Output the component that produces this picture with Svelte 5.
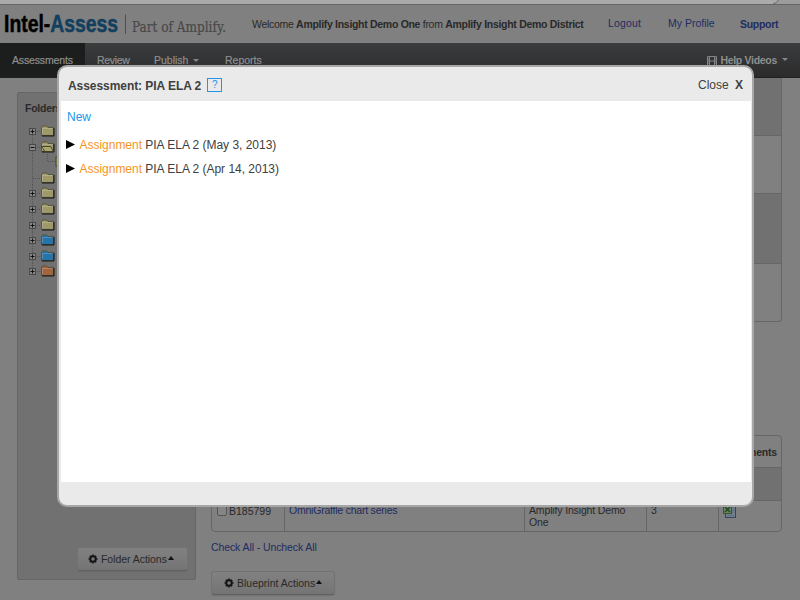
<script>
  const folders = [
    { c: '#9d996a', box: '+' },
    { c: '#9d996a', box: '−', open: true },
    { c: '#9d996a', child: true },
    { c: '#9d996a' },
    { c: '#9d996a', box: '+' },
    { c: '#9d996a', box: '+' },
    { c: '#9d996a', box: '+' },
    { c: '#2674a8', box: '+' },
    { c: '#2674a8', box: '+' },
    { c: '#a0663f', box: '+' }
  ];
  const assignments = ['PIA ELA 2 (May 3, 2013)', 'PIA ELA 2 (Apr 14, 2013)'];
</script>

{#snippet gear()}
  <svg class="gear" width="10" height="10" viewBox="0 0 10 10">
    <circle cx="5" cy="5" r="2.700" fill="none" stroke="#151515" stroke-width="2" />
    <path d="M5 0.500V1.800M5 8.200V9.500M0.500 5H1.800M8.200 5H9.500M1.900 1.900L2.700 2.700M7.300 7.300L8.100 8.100M1.900 8.100L2.700 7.300M7.300 2.700L8.100 1.900" stroke="#151515" stroke-width="1.700" />
  </svg>
{/snippet}

<div class="page">
  <div class="strip">
    <svg width="30" height="5" viewBox="0 0 30 5"><path d="M4 4Q8 3 9 0H30V4Z" fill="#9c9c9c" /><path d="M3 4Q7 3 8.500 0" fill="none" stroke="#666" /></svg>
  </div>
  <header>
    <svg class="logo" width="232" height="38" viewBox="0 0 232 38">
      <text class="brand" x="4" y="27" textLength="114" lengthAdjust="spacingAndGlyphs">Intel-<tspan class="blue">Assess</tspan></text>
      <path d="M125.500 9.500V29" stroke="#505050" />
      <text class="tag" x="132" y="26.500" textLength="94" lengthAdjust="spacingAndGlyphs">Part of Amplify.</text>
    </svg>
    <p class="welcome">Welcome <b>Amplify Insight Demo One</b> from <b>Amplify Insight Demo District</b></p>
    <nav class="links"><a class="out">Logout</a><a class="prof">My Profile</a><a class="sup"><b>Support</b></a></nav>
  </header>
  <nav class="bar">
    <span class="tab on">Assessments</span><span class="tab review">Review</span><span class="tab publish">Publish<i class="down"></i></span><span class="tab">Reports</span>
    <span class="help">
      <svg width="10" height="10" viewBox="0 0 10 10"><path d="M.5.5H9.500V9.500H.5ZM2.500.5V9.500M7.500.5V9.500M2.500 5H7.500M.5 3H2.500M.5 5H2.500M.5 7H2.500M7.500 3H9.500M7.500 5H9.500M7.500 7H9.500" fill="none" stroke="#8d8d8d" stroke-width=".9" /></svg>
      <b>Help Videos</b><i class="down"></i>
    </span>
  </nav>

  <div class="content">
    <aside>
      <h2>Folders</h2>
      <div class="tree">
        {#each folders as f, i}
          <svg width="40" height="15.600" viewBox="0 0 40 15.600">
            <path d={i === 0 ? 'M7.500 8V16' : i === 9 ? 'M7.500 0V8' : 'M7.500 0V16'} stroke="#555" stroke-dasharray="1 1" />
            {#if f.child}
              <path d="M22.500 0V7.500H31" fill="none" stroke="#555" stroke-dasharray="1 1" />
              <rect x="31" y="3" width="9" height="9" fill={f.c} stroke="#44431f" />
            {:else}
              <path d="M8 8.500H17" stroke="#555" stroke-dasharray="1 1" />
              {#if f.box}
                <rect x="4.500" y="5.500" width="6" height="6" fill="#858585" stroke="#4a4a4a" />
                <path d={f.box === '+' ? 'M5.500 8.500H9.500M7.500 6.500V10.500' : 'M5.500 8.500H9.500'} stroke="#111" />
              {/if}
              <path d="M16.500 12.500V4.500L18 3H21.500L23 4.500H28.500V12.500Z" fill={f.c} stroke="#4d4b33" stroke-width=".8" />
              <path d="M17.500 11V5.500H27.500" fill="none" stroke="#ffffff35" />
              <path d="M17 13H29V5" fill="none" stroke="#151515" />
              {#if f.open}
                <path d="M16.500 7.500H25.500L28.500 12.500H20Z" fill="#aaa66f" stroke="#34331d" stroke-width=".8" />
              {/if}
            {/if}
          </svg>
        {/each}
      </div>
      <button class="fa">{@render gear()}<span>Folder Actions</span><i class="up"></i></button>
    </aside>

    <main>
      <div class="upper">
        <div class="dark r1"></div><div class="r2"></div><div class="dark r3"></div><div class="r4"></div>
      </div>
      <div class="lower">
        <div class="row head"><b>Assessments</b></div>
        <div class="row dark mid"></div>
        <div class="row cells">
          <div class="c1"><span class="check"></span><span>B185799</span></div>
          <div class="c2"><a>OmniGraffle chart series</a></div>
          <div class="c3">Amplify Insight Demo<br />One</div>
          <div class="c4">3</div>
          <div class="c5">
            <svg width="14" height="15" viewBox="0 0 14 15"><rect x="2.500" y="1.500" width="10" height="12" fill="#77818c" stroke="#32465f" /><path d="M9 4H12M9 6H12M9 8H12M4 11.500H11" stroke="#586e82" /><rect x=".5" y="1.500" width="8" height="8" fill="#71836b" stroke="#315a2c" /><path d="M2 3L7 8M7 3L2 8" stroke="#1f4d1d" stroke-width="1.500" /></svg>
          </div>
        </div>
      </div>
      <p class="checks"><a>Check All</a> - <a>Uncheck All</a></p>
      <button class="ba">{@render gear()}<span>Blueprint Actions</span><i class="up"></i></button>
    </main>
  </div>

  <section class="modal">
    <div class="title">
      <b>Assessment: PIA ELA 2</b><span class="q">?</span>
      <span class="close">Close <b>X</b></span>
    </div>
    <div class="body">
      <a class="new">New</a>
      {#each assignments as a}
        <div class="item"><svg width="9" height="9" viewBox="0 0 9 9"><path d="M0 0L9 4.500L0 9Z" fill="#000" /></svg><p><span>Assignment</span> {a}</p></div>
      {/each}
    </div>
  </section>
</div>

<style>
  :global(body) { margin: 0; }
  .page, .page * { box-sizing: border-box; }
  .page { position: relative; width: 800px; height: 600px; overflow: hidden; background: #808080; font: 11px/12px "Liberation Sans", Arial, sans-serif; color: #292929; display: flex; flex-direction: column; }
  p, h2 { margin: 0; }
  a { color: #1f2c60; }
  .strip { height: 5px; flex: none; background: #aaa; border-bottom: 1px solid #656565; display: flex; justify-content: flex-end; }
  header { height: 38px; flex: none; display: flex; }
  .logo { flex: none; margin-right: 20px; overflow: visible; }
  .brand { font: bold 24px "Liberation Sans", sans-serif; fill: #000; stroke: #000; stroke-width: .5px; }
  .blue { fill: #123f5e; stroke: #123f5e; }
  .tag { font: 14.5px "DejaVu Serif", serif; fill: #484848; stroke: #484848; stroke-width: .2px; }
  .welcome { padding-top: 13px; width: 356px; white-space: nowrap; font-size: 10.5px; letter-spacing: -.3px; }
  .links { display: flex; padding-top: 12px; font-size: 10.5px; white-space: nowrap; }
  .out { width: 60px; letter-spacing: .15px; } .prof { width: 72px; } .sup { padding-top: 1px; letter-spacing: -.3px; }
  .bar { height: 35px; flex: none; display: flex; background: linear-gradient(#3b3c3d, #2b2b2c); border-bottom: 1px solid #202020; color: #8f8f8f; font-size: 10.5px; }
  .tab { padding-top: 11px; white-space: nowrap; -webkit-text-stroke: .2px #8f8f8f; }
  .on { width: 85px; padding-left: 12px; background: #1c1d1d; letter-spacing: -.15px; }
  .review { padding-left: 12px; width: 69px; letter-spacing: -.3px; }
  .publish { width: 71px; }
  .down { display: inline-block; border: 3.5px solid transparent; border-top-color: #888; border-bottom: 0; margin-left: 5px; vertical-align: 2px; }
  .help { margin-left: auto; padding: 11px 12px 0 0; display: flex; white-space: nowrap; letter-spacing: -.3px; }
  .help svg { margin: 2px 3px 0 0; }
  .help .down { margin-top: 4px; height: 4px; }
  .content { display: flex; height: 522px; flex: none; }
  aside { margin: 14px 15px 0 17px; width: 179px; height: 488px; background: #717171; border: 1px solid #666; border-radius: 2px; display: flex; flex-direction: column; flex: none; }
  h2 { font: bold 10.5px/12px "Liberation Sans", sans-serif; letter-spacing: -.25px; margin: 9px 0 0 7px; }
  .tree { margin: 9px 0 0 7px; display: flex; flex-direction: column; }
  .tree svg { display: block; }
  button { display: flex; align-items: center; border: 1px solid #727272; border-bottom-color: #606060; border-radius: 3px; background: linear-gradient(#818181, #747474); box-shadow: 0 1px 1px #6668; font: 10.5px/12px "Liberation Sans", sans-serif; color: #292929; padding: 0 11px; height: 24px; white-space: nowrap; }
  .gear { margin-right: 3px; flex: none; }
  .up { border: 3.5px solid transparent; border-bottom: 4px solid #111; border-top: 0; margin: -2px 0 0 1px; }
  .fa { width: 111px; margin: auto 7px 8px auto; letter-spacing: -.05px; padding-left: 10px; }
  main { width: 571px; display: flex; flex-direction: column; flex: none; }
  .upper { height: 244px; border: 1px solid #666; border-top: 0; border-radius: 0 0 4px 4px; }
  .upper div { border-bottom: 1px solid #666; }
  .dark { background: #717171; }
  .r1, .r2 { height: 58px; } .r3 { height: 70px; } .upper .r4 { border: 0; height: 57px; }
  .lower { margin-top: 113px; border: 1px solid #666; border-radius: 4px; height: 97px; flex: none; overflow: hidden; }
  .head { height: 32px; display: flex; justify-content: flex-end; padding: 10px 4px 0; font-size: 10.5px; letter-spacing: -.2px; border-bottom: 1px solid #666; }
  .mid { height: 33px; border-bottom: 1px solid #666; }
  .cells { display: flex; height: 31px; font-size: 10.5px; }
  .cells > div { border-right: 1px solid #666; padding: 3px 4px 0; white-space: nowrap; }
  .cells .c1 { width: 73px; display: flex; padding-top: 4px; padding-left: 5px; }
  .check { width: 10px; height: 11px; border: 1px solid #555; border-radius: 2px; margin-right: 2px; background: #858585; }
  .cells .c2 { width: 240px; letter-spacing: -.22px; } .c3 { width: 122px; letter-spacing: -.15px; } .c4 { width: 72px; } .cells .c5 { border: 0; padding-top: 3px; }
  .checks { margin-top: 9px; font-size: 10.5px; letter-spacing: -.1px; color: #1f2c60; }
  .ba { width: 124px; margin-top: 18px; padding-left: 12px; }
  .modal { position: absolute; left: 57px; top: 65px; width: 697px; height: 442px; border: 2px solid #a7a7a7; border-radius: 10px; background: #eaeaea; color: #404040; font: 12px/14px "Liberation Sans", Arial, sans-serif; overflow: hidden; }
  .title { height: 34px; display: flex; align-items: center; padding: 3px 9px 0; }
  .title > b { letter-spacing: -.06px; }
  .q { width: 15px; height: 14px; margin-left: 6px; margin-top: -2px; border: 1px solid #2196eb; color: #2196eb; font-size: 10px; line-height: 12px; text-align: center; }
  .close { margin-left: auto; margin-top: -2px; word-spacing: 3px; }
  .body { height: 381px; margin: 0 1px 0 2px; padding: 9px 6px; background: #fff; display: flex; flex-direction: column; }
  .new { color: #2196eb; margin-bottom: 14px; }
  .item { height: 24px; display: flex; white-space: nowrap; letter-spacing: -.02px; }
  .item svg { margin: 2px 4.5px 0 -1px; }
  .item span { color: #f7941e; }
</style>
